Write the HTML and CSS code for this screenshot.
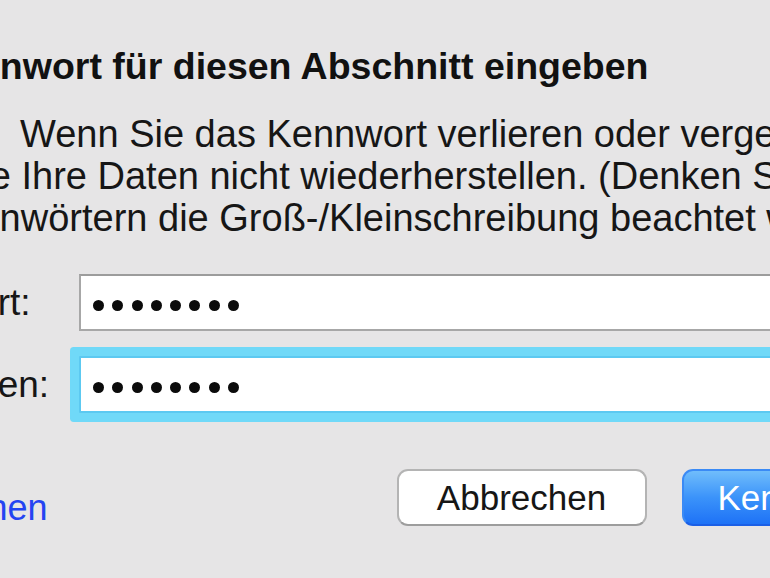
FILE: index.html
```html
<!DOCTYPE html>
<html lang="de">
<head>
    <meta charset="UTF-8">
    <meta name="viewport" content="width=device-width, initial-scale=1.0">
    <title>Kennwort festlegen</title>
    <link rel="stylesheet" href="styles.css">
</head>
<body>
    <div class="dialog">
        <h1 class="title">Kennwort für diesen Abschnitt eingeben</h1>

        <div class="message">
            <div class="line line-1">Wenn Sie das Kennwort verlieren oder vergessen, können</div>
            <div class="line line-2">Sie Ihre Daten nicht wiederherstellen. (Denken Sie daran, dass bei</div>
            <div class="line line-3">Kennwörtern die Groß-/Kleinschreibung beachtet wird.)</div>
        </div>

        <form class="fields">
            <div class="row">
                <label class="label">Kennwort:</label>
                <div class="field">
                    <span class="dot"></span><span class="dot"></span><span class="dot"></span><span class="dot"></span>
                    <span class="dot"></span><span class="dot"></span><span class="dot"></span><span class="dot"></span>
                </div>
            </div>
            <div class="row">
                <label class="label">Bestätigen:</label>
                <div class="field focused">
                    <span class="dot"></span><span class="dot"></span><span class="dot"></span><span class="dot"></span>
                    <span class="dot"></span><span class="dot"></span><span class="dot"></span><span class="dot"></span>
                </div>
            </div>
        </form>

        <div class="footer">
            <a class="help" href="#">Weitere Informationen</a>
            <div class="actions">
                <button class="btn" type="button">Abbrechen</button>
                <button class="btn btn-primary" type="button">Kennwort festlegen</button>
            </div>
        </div>
    </div>
</body>
</html>
```

FILE: styles.css
```css
html, body {
    margin: 0;
    height: 100%;
}

body {
    background-color: #e6e5e6;
    font-family: "Liberation Sans", Arial, sans-serif;
    color: #161616;
    overflow: hidden;
}

.dialog {
    padding-top: 44px;
}

.title {
    margin: 0 0 0 -71px;
    font-size: 37.5px;
    line-height: 44px;
    font-weight: bold;
    white-space: nowrap;
    color: #111;
}

/* Informative text, each line as it wraps in the dialog */
.message {
    margin-top: 25px;
    font-size: 38px;
    line-height: 42px;
    white-space: nowrap;
}

.line-1 {
    padding-left: 20px;
}

.line-2 {
    margin-left: -44px;
}

.line-3 {
    margin-left: -68px;
}

/* Password fields */
.fields {
    margin-top: 35px;
    display: flex;
    flex-direction: column;
    gap: 25px;
}

.row {
    display: flex;
    align-items: center;
    margin-left: -136px;
}

.label {
    width: 215px;
    flex: none;
    font-size: 37px;
}

.field {
    width: 900px;
    height: 57px;
    flex: none;
    background: #fff;
    border: 2px solid #a7a7a7;
    border-top-color: #9c9c9c;
    display: flex;
    align-items: center;
    gap: 8.3px;
    padding: 5px 0 0 12px;
    box-sizing: border-box;
}

.field.focused {
    border-color: #5cc9f1;
    border-radius: 1px;
    box-shadow: 0 0 0 9px #70d9f8;
}

.dot {
    width: 11px;
    height: 11px;
    border-radius: 50%;
    background: #0b0b0b;
}

/* Bottom row */
.footer {
    margin-top: 56px;
    display: flex;
    align-items: flex-start;
}

.help {
    margin: 18px 0 0 -306px;
    font-size: 36px;
    color: #2444f2;
    text-decoration: none;
    white-space: nowrap;
}

.actions {
    margin-left: 349px;
    display: flex;
    gap: 35px;
}

.btn {
    flex: none;
    width: 250px;
    height: 57px;
    font-family: inherit;
    font-size: 35px;
    color: #161616;
    background: #fff;
    border: 2px solid #b4b4b4;
    border-bottom-color: #9d9d9d;
    border-radius: 11px;
    white-space: nowrap;
    padding: 0;
}

.btn-primary {
    width: 330px;
    text-align: left;
    padding-left: 34px;
    color: #fff;
    background: linear-gradient(#70bdfb, #3b93fa 50%, #1e72f6);
    border-color: #3a8af5;
    border-bottom-color: #1b5fe6;
}
```
